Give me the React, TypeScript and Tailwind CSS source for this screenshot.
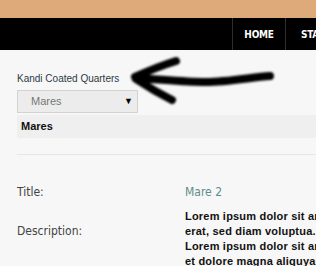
export default function App() {
  const lorem = [
    'Lorem ipsum dolor sit amet, consetetur sadipscing elitr, sed diam nonumy eirmod tempor invidunt ut labore',
    'erat, sed diam voluptua. At vero eos et accusam et justo duo dolores et ea rebum.',
    'Lorem ipsum dolor sit amet, consetetur sadipscing elitr, sed diam nonumy eirmod tempor invidunt ut labore',
    'et dolore magna aliquyam erat, sed diam voluptua.',
  ]

  return (
    <div className="relative w-[316px] h-[266px] overflow-hidden bg-[#f7f7f7] font-['Liberation_Sans',Arial,sans-serif]">
      <div className="h-[18px] bg-[#dfaa79]" />
      <nav className="h-[32px] bg-black flex justify-end">
        <div className="w-[84px] flex shrink-0">
          <div className="w-[54px] shrink-0 border-l border-r border-[#2e2e2e] flex items-center justify-center text-white text-[10px] font-['DejaVu_Sans_Condensed','DejaVu_Sans',sans-serif] font-bold tracking-tight">
            HOME
          </div>
          <div className="pl-[15px] flex items-center text-white text-[10px] font-['DejaVu_Sans_Condensed','DejaVu_Sans',sans-serif] font-bold tracking-tight whitespace-nowrap">
            STALLIONS
          </div>
        </div>
      </nav>

      <div className="pl-[17px]">
        <div className="pt-[22px] text-[10px] leading-[13px] text-[#2c3a44]">Kandi Coated Quarters</div>
        <div className="mt-[5px] w-[121px] h-[23px] bg-[#ececec] border border-[#d2d2d2] flex items-center justify-between pl-[13px] pr-[4px]">
          <span className="text-[11px] text-[#777]">Mares</span>
          <span className="text-[9px] text-black">▼</span>
        </div>
        <div className="mt-[2px] h-[23px] bg-[#efefef] flex items-center pl-[4px] text-[11px] font-bold text-[#111]">
          Mares
        </div>
        <div className="mt-[16px] h-px bg-[#e6e6e6]" />

        <div className="mt-[30px] grid grid-cols-[168px_1fr] font-['DejaVu_Sans_Condensed','DejaVu_Sans',sans-serif]">
          <div className="text-[12px] leading-[15px] text-[#444]">Title:</div>
          <div className="text-[12px] leading-[15px] text-[#5f8d8a]">Mare 2</div>
          <div className="text-[12px] leading-[15px] text-[#444] pt-[24px]">Description:</div>
          <div className="pt-[9px] font-['Liberation_Sans',Arial,sans-serif] font-bold text-[11px] leading-[15px] tracking-[0.2px] text-[#111]">
            {lorem.map((line, i) => (
              <div key={i} className="whitespace-nowrap">{line}</div>
            ))}
          </div>
        </div>
      </div>

      <svg className="absolute left-[128px] top-[55px]" width="155" height="52" viewBox="0 0 155 52">
        <defs>
          <filter id="soft" x="-10%" y="-30%" width="120%" height="160%">
            <feGaussianBlur stdDeviation="1.1" />
          </filter>
        </defs>
        <g filter="url(#soft)" fill="none" stroke="#000" strokeLinecap="round" strokeLinejoin="round">
          <path d="M8 23 C 30 24, 55 27, 78 27 C 100 27, 125 22, 142 21" strokeWidth="8" />
          <path d="M7 22 C 20 16, 35 10, 48 6" strokeWidth="8" />
          <path d="M8 24 C 20 32, 32 39, 44 45" strokeWidth="8" />
        </g>
      </svg>
    </div>
  )
}
